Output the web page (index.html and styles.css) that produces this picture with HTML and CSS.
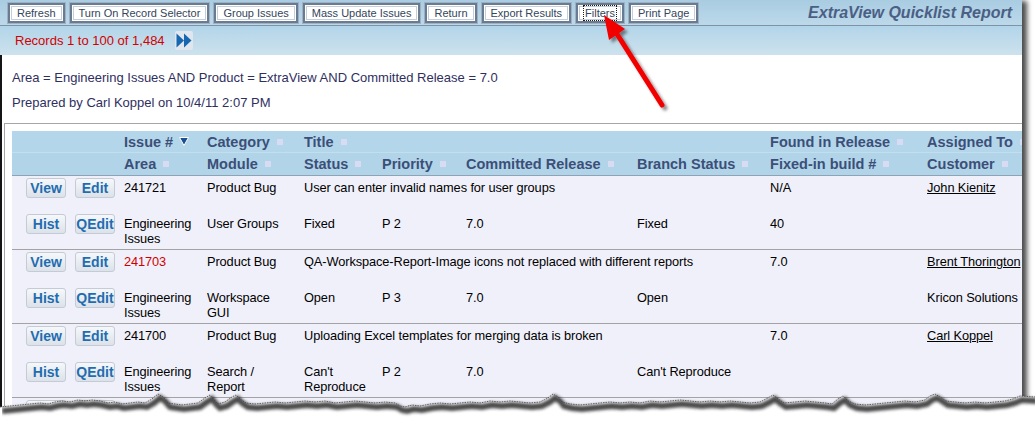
FILE: index.html
```html
<!DOCTYPE html>
<html>
<head>
  <link rel="stylesheet" href="styles.css">
</head>
<body>
<div class="page">
  <div class="toolbar">
    <button class="tb-btn">Refresh</button>
    <button class="tb-btn">Turn On Record Selector</button>
    <button class="tb-btn">Group Issues</button>
    <button class="tb-btn">Mass Update Issues</button>
    <button class="tb-btn">Return</button>
    <button class="tb-btn">Export Results</button>
    <button class="tb-btn"><span class="focus">Filters</span></button>
    <button class="tb-btn">Print Page</button>
    <span class="report-title">ExtraView Quicklist Report</span>
  </div>
  <div class="records">
    Records 1 to 100 of 1,484
    <span class="next">
      <svg width="18" height="19" viewBox="0 0 18 19"><polygon points="1.5,2.5 9,9.5 1.5,16.5" fill="#1766b2"/><polygon points="9,2.5 16.5,9.5 9,16.5" fill="#1766b2"/></svg>
    </span>
  </div>

  <div class="content">
    <div class="filter">
      <div>Area = Engineering Issues AND Product = ExtraView AND Committed Release = 7.0</div>
      <div>Prepared by Carl Koppel on 10/4/11 2:07 PM</div>
    </div>

    <div class="list-box">
      <table class="list">
        <colgroup>
          <col class="c-act"><col class="c-id"><col class="c-cat"><col class="c-status"><col class="c-prio">
          <col class="c-rel"><col class="c-branch"><col class="c-found"><col class="c-who">
        </colgroup>
        <thead>
          <tr class="h1">
            <th></th>
            <th>Issue # <svg class="sort" width="10" height="9" viewBox="0 0 10 9"><polygon points="0.5,0.5 9.5,0.5 5,8.5" fill="#1b4f8f" stroke="#fff" stroke-width="1"/></svg></th>
            <th>Category<span class="sq"></span></th>
            <th colspan="4">Title<span class="sq"></span></th>
            <th>Found in Release<span class="sq"></span></th>
            <th>Assigned To<span class="sq"></span></th>
          </tr>
          <tr class="h2">
            <th></th>
            <th>Area<span class="sq"></span></th>
            <th>Module<span class="sq"></span></th>
            <th>Status<span class="sq"></span></th>
            <th>Priority<span class="sq"></span></th>
            <th>Committed Release<span class="sq"></span></th>
            <th>Branch Status<span class="sq"></span></th>
            <th>Fixed-in build #<span class="sq"></span></th>
            <th>Customer<span class="sq"></span></th>
          </tr>
        </thead>
        <tbody>
          <tr class="r1">
            <td class="acts"><div><button class="rb">View</button><button class="rb">Edit</button></div></td>
            <td>241721</td>
            <td>Product Bug</td>
            <td colspan="4">User can enter invalid names for user groups</td>
            <td>N/A</td>
            <td><a href="#">John Kienitz</a></td>
          </tr>
          <tr class="r2">
            <td class="acts"><div><button class="rb">Hist</button><button class="rb">QEdit</button></div></td>
            <td>Engineering Issues</td>
            <td>User Groups</td>
            <td>Fixed</td>
            <td>P 2</td>
            <td>7.0</td>
            <td>Fixed</td>
            <td>40</td>
            <td></td>
          </tr>

          <tr class="r1">
            <td class="acts"><div><button class="rb">View</button><button class="rb">Edit</button></div></td>
            <td class="hot">241703</td>
            <td>Product Bug</td>
            <td colspan="4">QA-Workspace-Report-Image icons not replaced with different reports</td>
            <td>7.0</td>
            <td><a href="#">Brent Thorington</a></td>
          </tr>
          <tr class="r2">
            <td class="acts"><div><button class="rb">Hist</button><button class="rb">QEdit</button></div></td>
            <td>Engineering Issues</td>
            <td>Workspace GUI</td>
            <td>Open</td>
            <td>P 3</td>
            <td>7.0</td>
            <td>Open</td>
            <td></td>
            <td>Kricon Solutions</td>
          </tr>

          <tr class="r1">
            <td class="acts"><div><button class="rb">View</button><button class="rb">Edit</button></div></td>
            <td>241700</td>
            <td>Product Bug</td>
            <td colspan="4">Uploading Excel templates for merging data is broken</td>
            <td>7.0</td>
            <td><a href="#">Carl Koppel</a></td>
          </tr>
          <tr class="r2">
            <td class="acts"><div><button class="rb">Hist</button><button class="rb">QEdit</button></div></td>
            <td>Engineering Issues</td>
            <td>Search / Report</td>
            <td>Can't Reproduce</td>
            <td>P 2</td>
            <td>7.0</td>
            <td>Can't Reproduce</td>
            <td></td>
            <td></td>
          </tr>

          <tr class="r1">
            <td class="acts"><div><button class="rb">View</button><button class="rb">Edit</button></div></td>
            <td>241698</td>
            <td>Product Bug</td>
            <td colspan="4">Report filter drops the last value</td>
            <td>7.0</td>
            <td><a href="#">Carl Koppel</a></td>
          </tr>
        </tbody>
      </table>
    </div>
  </div>

  <!-- callout arrow pointing at the Filters button -->
  <svg class="arrow" width="90" height="115" viewBox="0 0 90 115">
    <defs>
      <filter id="ashadow" x="-30%" y="-30%" width="160%" height="160%">
        <feDropShadow dx="3" dy="3" stdDeviation="1.6" flood-color="#000" flood-opacity="0.45"/>
      </filter>
    </defs>
    <g filter="url(#ashadow)">
      <line x1="27" y1="29" x2="72" y2="100" stroke="#f20000" stroke-width="5" stroke-linecap="round"/>
      <polygon points="14,10 35,24 19,35" fill="#f20000"/>
    </g>
  </svg>
</div>

<!-- torn paper edge -->
<svg class="torn" width="1035" height="38" viewBox="0 0 1035 38">
  <defs>
    <filter id="tshadow" x="0" y="-50%" width="100%" height="200%">
      <feGaussianBlur stdDeviation="1.8"/>
    </filter>
  </defs>
  <path d="M0,22 L10,21 L20,20 L30,19 L40,18 L48,19 L55,17 L62,16 L70,17 L78,15 L85,16 L92,15 L100,16 L108,18 L115,17 L122,19 L130,18 L138,17 L145,18 L152,14 L158,9 L163,12 L168,18 L175,19 L182,20 L190,19 L198,18 L205,13 L210,10 L214,15 L218,19 L225,17 L232,12 L236,10 L240,14 L246,18 L255,19 L265,18 L275,17 L285,18 L295,17 L305,16 L315,17 L325,16 L335,18 L345,17 L355,16 L365,17 L375,18 L385,17 L395,18 L400,21 L405,22 L412,20 L420,21 L430,19 L440,18 L450,19 L460,18 L470,17 L480,18 L490,16 L500,17 L510,16 L520,17 L530,18 L540,17 L548,13 L553,9 L558,12 L562,17 L570,19 L580,20 L590,19 L600,18 L610,17 L620,18 L630,17 L640,18 L650,16 L660,17 L670,16 L680,15 L690,16 L700,17 L710,16 L720,17 L730,16 L740,17 L750,18 L760,17 L768,13 L773,10 L778,14 L784,18 L795,17 L805,16 L815,17 L825,18 L832,19 L838,14 L843,11 L848,16 L855,19 L865,20 L875,19 L885,18 L895,17 L905,16 L915,17 L925,15 L930,11 L935,9 L940,12 L946,16 L955,17 L965,18 L975,17 L985,18 L995,17 L1005,16 L1013,14 L1020,11 L1035,12 L1035,38 L0,38 Z" fill="#fff"/>
  <path d="M0,22 L10,21 L20,20 L30,19 L40,18 L48,19 L55,17 L62,16 L70,17 L78,15 L85,16 L92,15 L100,16 L108,18 L115,17 L122,19 L130,18 L138,17 L145,18 L152,14 L158,9 L163,12 L168,18 L175,19 L182,20 L190,19 L198,18 L205,13 L210,10 L214,15 L218,19 L225,17 L232,12 L236,10 L240,14 L246,18 L255,19 L265,18 L275,17 L285,18 L295,17 L305,16 L315,17 L325,16 L335,18 L345,17 L355,16 L365,17 L375,18 L385,17 L395,18 L400,21 L405,22 L412,20 L420,21 L430,19 L440,18 L450,19 L460,18 L470,17 L480,18 L490,16 L500,17 L510,16 L520,17 L530,18 L540,17 L548,13 L553,9 L558,12 L562,17 L570,19 L580,20 L590,19 L600,18 L610,17 L620,18 L630,17 L640,18 L650,16 L660,17 L670,16 L680,15 L690,16 L700,17 L710,16 L720,17 L730,16 L740,17 L750,18 L760,17 L768,13 L773,10 L778,14 L784,18 L795,17 L805,16 L815,17 L825,18 L832,19 L838,14 L843,11 L848,16 L855,19 L865,20 L875,19 L885,18 L895,17 L905,16 L915,17 L925,15 L930,11 L935,9 L940,12 L946,16 L955,17 L965,18 L975,17 L985,18 L995,17 L1005,16 L1013,14 L1020,11 L1035,12" fill="none" stroke="#2a2a2a" stroke-width="6" transform="translate(2,4)" filter="url(#tshadow)" opacity="0.85"/>
  <path d="M0,22 L10,21 L20,20 L30,19 L40,18 L48,19 L55,17 L62,16 L70,17 L78,15 L85,16 L92,15 L100,16 L108,18 L115,17 L122,19 L130,18 L138,17 L145,18 L152,14 L158,9 L163,12 L168,18 L175,19 L182,20 L190,19 L198,18 L205,13 L210,10 L214,15 L218,19 L225,17 L232,12 L236,10 L240,14 L246,18 L255,19 L265,18 L275,17 L285,18 L295,17 L305,16 L315,17 L325,16 L335,18 L345,17 L355,16 L365,17 L375,18 L385,17 L395,18 L400,21 L405,22 L412,20 L420,21 L430,19 L440,18 L450,19 L460,18 L470,17 L480,18 L490,16 L500,17 L510,16 L520,17 L530,18 L540,17 L548,13 L553,9 L558,12 L562,17 L570,19 L580,20 L590,19 L600,18 L610,17 L620,18 L630,17 L640,18 L650,16 L660,17 L670,16 L680,15 L690,16 L700,17 L710,16 L720,17 L730,16 L740,17 L750,18 L760,17 L768,13 L773,10 L778,14 L784,18 L795,17 L805,16 L815,17 L825,18 L832,19 L838,14 L843,11 L848,16 L855,19 L865,20 L875,19 L885,18 L895,17 L905,16 L915,17 L925,15 L930,11 L935,9 L940,12 L946,16 L955,17 L965,18 L975,17 L985,18 L995,17 L1005,16 L1013,14 L1020,11 L1035,12" fill="none" stroke="#444" stroke-width="0.8" stroke-dasharray="1.5 1"/>
</svg>
</body>
</html>
```

FILE: styles.css
```css
body {
  margin: 0;
  padding: 0;
  height: 423px;
  position: relative;
  overflow: hidden;
  background-color: #ffffff;
  font-family: "Liberation Sans", Arial, sans-serif;
}

.page {
  position: relative;
  width: 1022px;
  height: 423px;
  overflow: hidden;
  background-color: #ffffff;
  box-shadow: 6px 0 5px -1px rgba(0, 0, 0, 0.7);
}

/* top button bar */
.toolbar {
  box-sizing: border-box;
  height: 26px;
  padding: 2px 0 0 7px;
  display: flex;
  align-items: flex-start;
  background: linear-gradient(#a9cce2, #bcd9ea);
  border-bottom: 1px solid #8093a6;
}

.tb-btn {
  height: 22px;
  margin-right: 3px;
  padding: 0 9px;
  font-family: "Liberation Sans", Arial, sans-serif;
  font-size: 11px;
  color: #34455c;
  background-color: #ffffff;
  border: 1px solid #9fb0c1;
  box-shadow: inset 0 0 0 2px #687b92, inset 0 0 0 3px #ffffff, inset 0 0 0 4px #c6cfd9;
  cursor: pointer;
}

.focus {
  outline: 1px dotted #1a1a1a;
  outline-offset: 1px;
}

.report-title {
  margin-left: auto;
  padding-right: 10px;
  line-height: 22px;
  font-size: 16px;
  font-weight: bold;
  font-style: italic;
  color: #4b5f84;
}

/* paging bar */
.records {
  box-sizing: border-box;
  height: 29px;
  padding-left: 15px;
  display: flex;
  align-items: center;
  font-size: 13px;
  color: #d20000;
  background: linear-gradient(#b2d4e9, #cde2ed);
}

.next {
  margin-left: 10px;
  width: 18px;
  height: 19px;
  display: flex;
  background-color: #e0e6ed;
  border-radius: 2px;
}

/* white report area */
.content {
  height: 368px;
  border-left: 2px solid #151515;
}

.filter {
  padding: 10px 0 0 10px;
  font-size: 13px;
  line-height: 25px;
  color: #2f2f5e;
}

.list-box {
  width: 1100px;
  margin: 8px 0 0 2px;
  padding: 7px 0 0 7px;
  border: 1px solid #a6a6a6;
}

.list {
  width: 1035px;
  table-layout: fixed;
  border-collapse: separate;
  border-spacing: 0;
}

.c-act { width: 112px; }
.c-id { width: 83px; }
.c-cat { width: 97px; }
.c-status { width: 78px; }
.c-prio { width: 84px; }
.c-rel { width: 171px; }
.c-branch { width: 133px; }
.c-found { width: 157px; }
.c-who { width: 120px; }

.list th {
  padding: 0;
  text-align: left;
  white-space: nowrap;
  font-size: 14.5px;
  font-weight: bold;
  color: #3c4f78;
  background-color: #b1d4e8;
}

.list .h1 th {
  height: 21px;
  background-color: #b4d6ea;
  border-bottom: 1px solid #c3dfee;
}

.list .h2 th {
  height: 22px;
  border-bottom: 1px solid #8ea3b6;
}

.sq {
  display: inline-block;
  width: 6px;
  height: 6px;
  margin-left: 7px;
  vertical-align: 2px;
  background-color: #d8dbf1;
}

.sort {
  margin-left: 2px;
  vertical-align: 1px;
}

.list td {
  padding: 4px 12px 0 0;
  vertical-align: top;
  font-size: 12.8px;
  letter-spacing: -0.1px;
  line-height: 15px;
  color: #000000;
  background-color: #f0f0fa;
}

.list .r1 {
  height: 36px;
}

.list .r2 {
  height: 38px;
}

.list .r2 td {
  border-bottom: 1px solid #a3a3a3;
}

.list td.acts {
  padding: 2px 0 0 14px;
}

.acts div {
  display: flex;
  gap: 9px;
}

.rb {
  width: 40px;
  height: 20px;
  padding: 0;
  font-family: "Liberation Sans", Arial, sans-serif;
  font-size: 14px;
  font-weight: bold;
  color: #1f6db1;
  background: linear-gradient(#f6f8fa, #dce2e9);
  border: 1px solid #c4cbd4;
  border-radius: 3px;
}

.list td.hot {
  color: #d00000;
}

.list a {
  color: #000000;
  text-decoration: underline;
}

/* overlays */
.arrow {
  position: absolute;
  left: 590px;
  top: 5px;
  pointer-events: none;
}

.torn {
  position: absolute;
  left: 0;
  top: 385px;
}
```
